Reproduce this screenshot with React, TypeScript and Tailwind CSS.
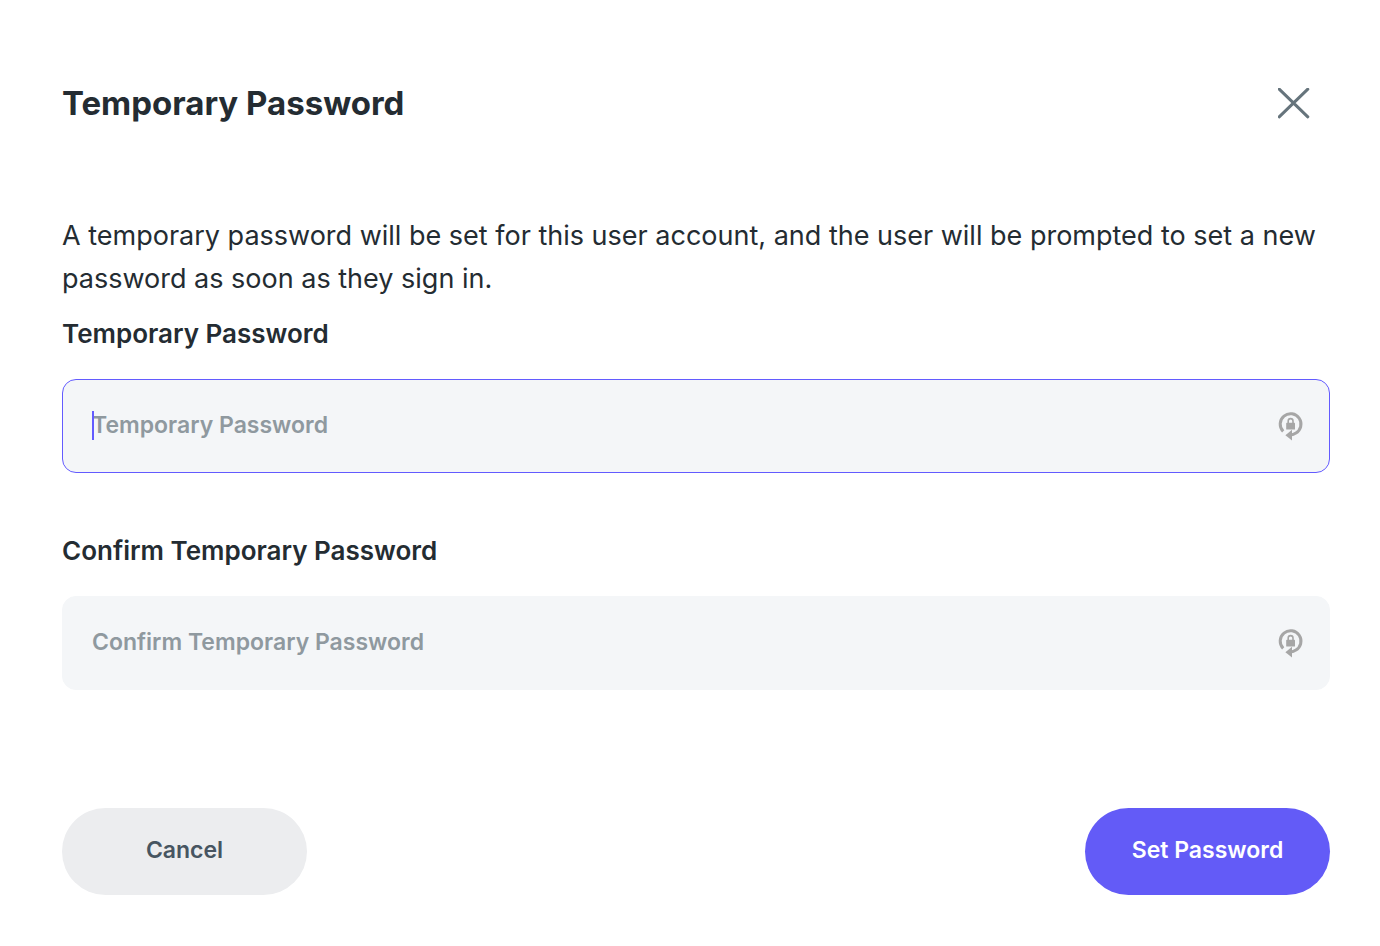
import { useState } from 'react'

interface FieldProps {
  id: string
  label: string
  active?: boolean
}

const GenerateIcon = () => (
  <svg className="h-8 w-8" viewBox="0 0 32 32" fill="none" aria-hidden="true">
    <path d="M8.2 21.4A10.4 10.4 0 1 1 20.6 23.2Q18.6 24.9 15.6 25" stroke="#a6a6a6" strokeWidth="3" />
    <path d="M10.4 25.2L17 19.8V30.6Z" fill="#a6a6a6" />
    <rect x="11.2" y="12.8" width="8.8" height="6.8" rx="0.6" fill="#a6a6a6" />
    <path d="M13.2 13.2v-2.2a2.4 2.4 0 0 1 4.8 0v2.2" stroke="#a6a6a6" strokeWidth="1.6" />
  </svg>
)

const PasswordField = ({ id, label, active = false }: FieldProps) => {
  const [value, setValue] = useState('')

  return (
    <div>
      <label htmlFor={id} className="block text-[26px] leading-10 font-semibold">
        {label}
      </label>
      <div
        className={`relative mt-[25px] flex h-[94px] items-center rounded-[14px] border bg-[#f4f6f8] pr-[22px] pl-[29px] ${
          active ? 'border-[#635bff]' : 'border-[#f4f6f8]'
        }`}
      >
        <input
          id={id}
          type="password"
          value={value}
          onChange={(e) => setValue(e.target.value)}
          placeholder={label}
          className="h-full min-w-0 flex-1 bg-transparent pb-0.5 text-[23px] font-semibold outline-none placeholder:text-[#8f999f]"
        />
        {active && !value && <span className="absolute top-[31px] left-[29px] h-[29px] w-[2px] bg-[#635bff]" />}
        <button type="button" aria-label="Generate password">
          <GenerateIcon />
        </button>
      </div>
    </div>
  )
}

export default function App() {
  return (
    <div
      role="dialog"
      aria-labelledby="dialog-title"
      className="min-h-screen bg-white pt-20 pr-[50px] pb-[51px] pl-[62px] font-[Inter,sans-serif] text-[#242c32]"
    >
      <div className="flex h-12 items-center justify-between">
        <h1 id="dialog-title" className="text-[33px] font-bold">
          Temporary Password
        </h1>
        <button type="button" aria-label="Close" className="mr-5">
          <svg className="h-8 w-8" viewBox="0 0 32 32" fill="none">
            <path d="M1.2 1.2L29.8 28.8M29.8 1.2L1.2 28.8" stroke="#66747c" strokeWidth="3" strokeLinecap="round" />
          </svg>
        </button>
      </div>

      <p className="mt-[86px] text-[27px] leading-[43px]">
        A temporary password will be set for this user account, and the user will be prompted to set a new password as
        soon as they sign in.
      </p>

      <form className="mt-[14px]" onSubmit={(e) => e.preventDefault()}>
        <div className="flex flex-col gap-[58px]">
          <PasswordField id="temporary-password" label="Temporary Password" active />
          <PasswordField id="confirm-password" label="Confirm Temporary Password" />
        </div>

        <div className="mt-[118px] flex justify-between">
          <button
            type="button"
            className="h-[87px] w-[245px] rounded-full bg-[#ecedef] pb-0.5 text-[23px] font-semibold text-[#475561]"
          >
            Cancel
          </button>
          <button
            type="submit"
            className="h-[87px] w-[245px] rounded-full bg-[#635bf7] pb-0.5 text-[23px] font-semibold text-white"
          >
            Set Password
          </button>
        </div>
      </form>
    </div>
  )
}
